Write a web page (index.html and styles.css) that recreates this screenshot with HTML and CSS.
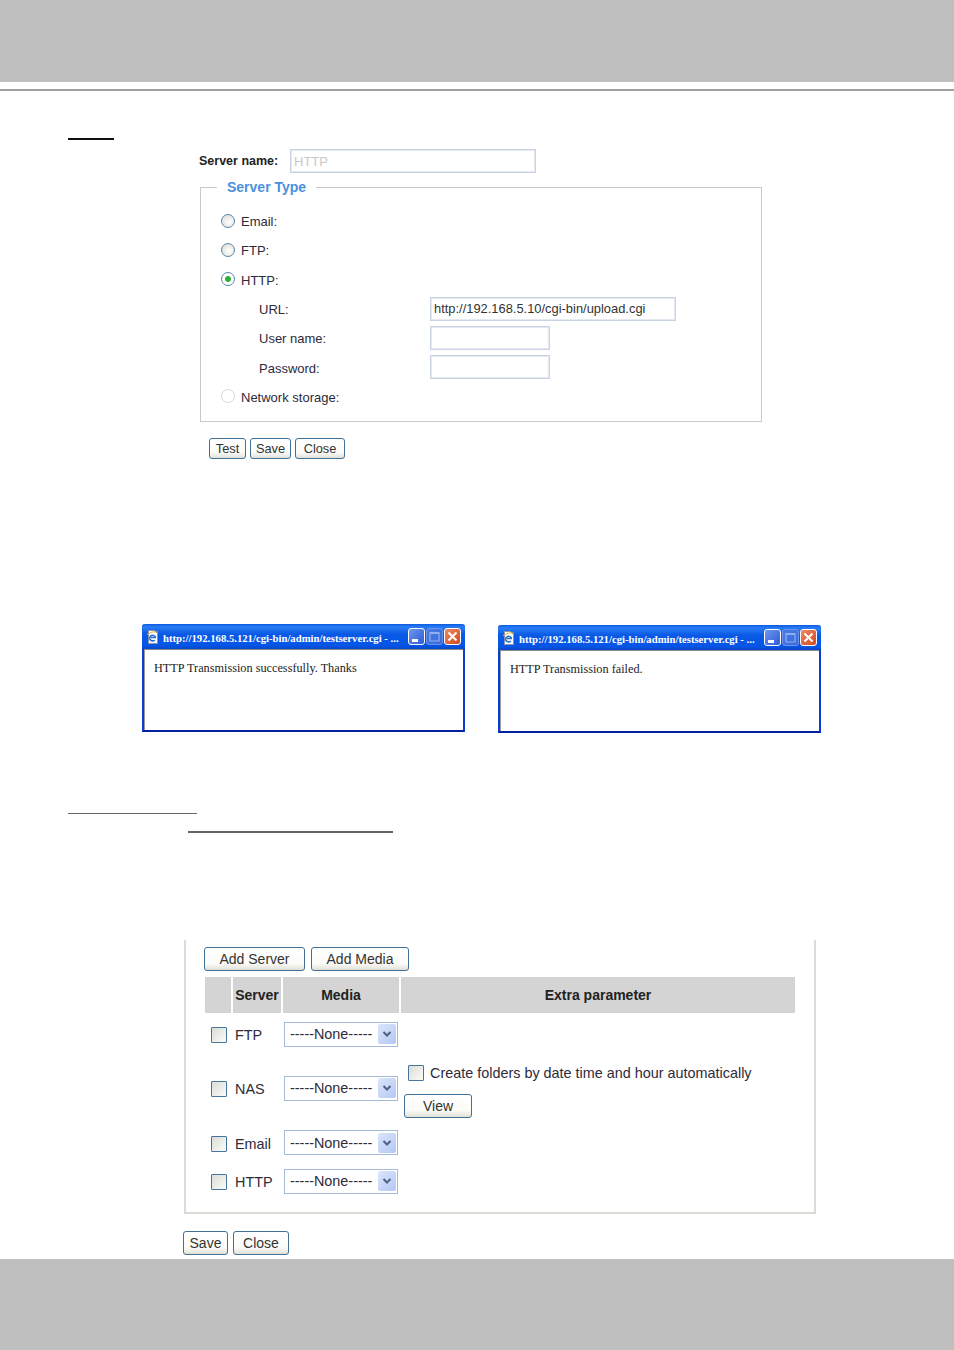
FILE: index.html
```html
<!DOCTYPE html>
<html>

<head>
    <meta charset="UTF-8">
    <title>Server Settings</title>
    <link rel="stylesheet" href="styles.css">
</head>

<body>
    <div class="band-top"></div>
    <div class="rule"></div>

    <main class="content">
        <div class="mark mark-one"></div>

        <!-- Server settings -->
        <div class="server-name">
            <label class="server-label">Server name:</label>
            <input class="text-box name-box" type="text" value="HTTP" disabled>
        </div>

        <fieldset class="server-type">
            <legend>Server Type</legend>
            <div class="type-row"><input class="radio" type="radio" name="type"><span>Email:</span></div>
            <div class="type-row"><input class="radio" type="radio" name="type"><span>FTP:</span></div>
            <div class="type-row"><input class="radio" type="radio" name="type" checked><span>HTTP:</span></div>
            <div class="sub-row"><span class="sub-label">URL:</span><input class="text-box url-box" type="text" value="http://192.168.5.10/cgi-bin/upload.cgi"></div>
            <div class="sub-row"><span class="sub-label">User name:</span><input class="text-box short-box" type="text"></div>
            <div class="sub-row"><span class="sub-label">Password:</span><input class="text-box short-box" type="password"></div>
            <div class="type-row"><input class="radio" type="radio" name="type" disabled><span>Network storage:</span></div>
        </fieldset>

        <div class="actions">
            <button class="btn btn-test">Test</button>
            <button class="btn btn-save">Save</button>
            <button class="btn btn-close">Close</button>
        </div>

        <!-- Result popups -->
        <div class="dialogs">
            <div class="dialog">
                <div class="titlebar">
                    <svg class="page-icon" width="14" height="14" viewBox="0 0 14 14"><path d="M2.5 .5h6l3 3v10h-9z" fill="#fff" stroke="#8a94a8"/><path d="M5 7.5h5M9.6 7.5a3 2.8 0 1 0-.8 2.6" fill="none" stroke="#2a6fd0" stroke-width="1.6"/><path d="M1 4.500q6-4 11-2.500" fill="none" stroke="#e8b030"/></svg>
                    <span class="title-text">http://192.168.5.121/cgi-bin/admin/testserver.cgi - ...</span>
                    <span class="win-btn"><svg width="17" height="17" viewBox="0 0 17 17"><rect x="4" y="11" width="6" height="3" fill="#fff"/></svg></span>
                    <span class="win-btn win-off"><svg width="17" height="17" viewBox="0 0 17 17"><path d="M4 4.500h9v8.500h-9z M4 5.500h9" fill="none" stroke="#8fb0ec" stroke-width="1.200"/></svg></span>
                    <span class="win-btn win-x"><svg width="17" height="17" viewBox="0 0 17 17"><path d="M4.500 4.500l8 8M12.500 4.500l-8 8" stroke="#fff" stroke-width="2"/></svg></span>
                </div>
                <div class="dialog-body">HTTP Transmission successfully. Thanks</div>
            </div>
            <div class="dialog dialog-low">
                <div class="titlebar">
                    <svg class="page-icon" width="14" height="14" viewBox="0 0 14 14"><path d="M2.5 .5h6l3 3v10h-9z" fill="#fff" stroke="#8a94a8"/><path d="M5 7.5h5M9.6 7.5a3 2.8 0 1 0-.8 2.6" fill="none" stroke="#2a6fd0" stroke-width="1.6"/><path d="M1 4.500q6-4 11-2.500" fill="none" stroke="#e8b030"/></svg>
                    <span class="title-text">http://192.168.5.121/cgi-bin/admin/testserver.cgi - ...</span>
                    <span class="win-btn"><svg width="17" height="17" viewBox="0 0 17 17"><rect x="4" y="11" width="6" height="3" fill="#fff"/></svg></span>
                    <span class="win-btn win-off"><svg width="17" height="17" viewBox="0 0 17 17"><path d="M4 4.500h9v8.500h-9z M4 5.500h9" fill="none" stroke="#8fb0ec" stroke-width="1.200"/></svg></span>
                    <span class="win-btn win-x"><svg width="17" height="17" viewBox="0 0 17 17"><path d="M4.500 4.500l8 8M12.500 4.500l-8 8" stroke="#fff" stroke-width="2"/></svg></span>
                </div>
                <div class="dialog-body">HTTP Transmission failed.</div>
            </div>
        </div>

        <div class="mark mark-two"></div>
        <div class="mark mark-three"></div>

        <!-- Media panel -->
        <div class="panel">
            <div class="panel-actions">
                <button class="btn btn-big btn-add-server">Add Server</button>
                <button class="btn btn-big btn-add-media">Add Media</button>
            </div>
            <table class="media-table">
                <thead>
                    <tr>
                        <th class="col-check"></th>
                        <th class="col-server">Server</th>
                        <th class="col-media">Media</th>
                        <th>Extra parameter</th>
                    </tr>
                </thead>
                <tbody>
                    <tr class="row-ftp">
                        <td class="cell-check"><input class="check" type="checkbox"></td>
                        <td class="cell-name">FTP</td>
                        <td class="cell-media"><div class="select"><span>-----None-----</span><span class="arrow"><svg width="10" height="8" viewBox="0 0 10 8"><path d="M1.500 2l3.500 3.500L8.500 2" fill="none" stroke="#4d6185" stroke-width="2"/></svg></span></div></td>
                        <td></td>
                    </tr>
                    <tr class="row-nas">
                        <td class="cell-check"><input class="check" type="checkbox"></td>
                        <td class="cell-name">NAS</td>
                        <td class="cell-media"><div class="select"><span>-----None-----</span><span class="arrow"><svg width="10" height="8" viewBox="0 0 10 8"><path d="M1.500 2l3.500 3.500L8.500 2" fill="none" stroke="#4d6185" stroke-width="2"/></svg></span></div></td>
                        <td class="cell-extra">
                            <div class="extra-line"><input class="check" type="checkbox"><span>Create folders by date time and hour automatically</span></div>
                            <button class="btn btn-big btn-view">View</button>
                        </td>
                    </tr>
                    <tr class="row-email">
                        <td class="cell-check"><input class="check" type="checkbox"></td>
                        <td class="cell-name">Email</td>
                        <td class="cell-media"><div class="select"><span>-----None-----</span><span class="arrow"><svg width="10" height="8" viewBox="0 0 10 8"><path d="M1.500 2l3.500 3.500L8.500 2" fill="none" stroke="#4d6185" stroke-width="2"/></svg></span></div></td>
                        <td></td>
                    </tr>
                    <tr class="row-http">
                        <td class="cell-check"><input class="check" type="checkbox"></td>
                        <td class="cell-name">HTTP</td>
                        <td class="cell-media"><div class="select"><span>-----None-----</span><span class="arrow"><svg width="10" height="8" viewBox="0 0 10 8"><path d="M1.500 2l3.500 3.500L8.500 2" fill="none" stroke="#4d6185" stroke-width="2"/></svg></span></div></td>
                        <td></td>
                    </tr>
                </tbody>
            </table>
        </div>

        <div class="panel-footer">
            <button class="btn btn-big btn-panel-save">Save</button>
            <button class="btn btn-big btn-panel-close">Close</button>
        </div>
    </main>

    <div class="band-bottom"></div>
</body>

</html>
```

FILE: styles.css
```css
* {
    box-sizing: border-box;
}

html,
body {
    height: 100%;
}

body {
    margin: 0;
    display: flex;
    flex-direction: column;
    background-color: #fff;
    color: #2e2a3a;
    font-family: "Liberation Sans", Arial, sans-serif;
    font-size: 13px;
}

.band-top {
    height: 82px;
    background-color: #bebfbe;
}

.rule {
    height: 2px;
    margin-top: 7px;
    background-color: #a0a0a0;
}

.band-bottom {
    height: 91px;
    background-color: #bebfbe;
}

.content {
    flex: 1;
    padding-left: 68px;
}

.mark {
    background-color: #111;
}

.mark-one {
    width: 46px;
    height: 2px;
    margin-top: 47px;
}

.mark-two {
    width: 129px;
    height: 1px;
    margin-top: 80px;
    background-color: #666;
}

.mark-three {
    width: 205px;
    height: 2px;
    margin-top: 17px;
    margin-left: 120px;
    background-color: #666;
}

/* Server settings */
.server-name {
    display: flex;
    align-items: center;
    margin-top: 9px;
    margin-left: 131px;
}

.server-label {
    width: 91px;
    font-size: 12.5px;
    font-weight: bold;
    color: #222;
}

.text-box {
    height: 24px;
    padding: 0 3px;
    border: 1px solid #c9d3e4;
    outline: 1px solid #e4e9f2;
    outline-offset: -2px;
    background-color: #fff;
    color: #333;
    font-family: "Liberation Sans", Arial, sans-serif;
    font-size: 12.9px;
}

.name-box {
    width: 246px;
    font-size: 13px;
    color: #c8c8c8;
}

.url-box {
    width: 246px;
}

.short-box {
    width: 120px;
}

.server-type {
    width: 562px;
    margin: 5px 0 0 132px;
    padding: 10px 0;
    border: 1px solid #ccc9c0;
}

.server-type legend {
    margin-left: 16px;
    padding: 0 10px;
    color: #4a90dc;
    font-size: 14px;
    line-height: 18px;
    font-weight: bold;
}

.type-row,
.sub-row {
    display: flex;
    align-items: center;
    height: 29.3px;
}

.type-row {
    padding-top: 2px;
    padding-left: 20px;
    gap: 6px;
}

.sub-row {
    padding-left: 58px;
}

.sub-label {
    width: 171px;
    padding-top: 2px;
}

.radio {
    appearance: none;
    width: 14px;
    height: 14px;
    margin: 0 0 2px;
    border: 1.5px solid #5a85a8;
    border-radius: 50%;
    background: radial-gradient(circle at 60% 60%, #fff, #d8d8d0);
}

.radio:checked {
    background: radial-gradient(circle, #2fae3a 0 2.500px, #fff 3.500px);
}

.radio:disabled {
    border-color: #d8d8d2;
    background: #fff;
}

.actions {
    display: flex;
    gap: 4px;
    margin: 16px 0 0 141px;
}

.btn {
    height: 21px;
    padding: 0;
    border: 1.500px solid #3f7199;
    border-radius: 3px;
    background: linear-gradient(#fff, #fbfbf8 70%, #e2e0d6);
    color: #333;
    font-family: "Liberation Sans", Arial, sans-serif;
    font-size: 12.800px;
}

.btn-test {
    width: 37px;
}

.btn-save {
    width: 41px;
}

.btn-close {
    width: 50px;
}

.btn-big {
    height: 24px;
    font-size: 14px;
}

.btn-add-server {
    width: 101px;
}

.btn-add-media {
    width: 98px;
}

.btn-view {
    display: block;
    width: 68px;
    margin-top: 13px;
}

.btn-panel-save {
    width: 45px;
}

.btn-panel-close {
    width: 56px;
}

/* Result popups */
.dialogs {
    display: flex;
    align-items: flex-start;
    gap: 33px;
    margin: 165px 0 0 74px;
}

.dialog {
    display: flex;
    flex-direction: column;
    width: 323px;
    height: 108px;
    border: 2px solid #0a3ed0;
    border-top: 0;
    border-bottom-color: #00209c;
    border-radius: 3px 3px 0 0;
}

.dialog-low {
    margin-top: 1px;
}

.titlebar {
    display: flex;
    align-items: center;
    height: 25px;
    margin: 0 -2px;
    padding: 0 4px;
    border-radius: 4px 4px 0 0;
    background: linear-gradient(#0a5be0, #2a7cf4 12%, #0a5ae6 40%, #0555e8 85%, #0a48c8);
}

.page-icon {
    flex: none;
    margin-right: 3px;
}

.title-text {
    flex: 1;
    padding-top: 2px;
    color: #fff;
    font-family: "Liberation Serif", "Times New Roman", serif;
    font-size: 10.7px;
    font-weight: bold;
    white-space: nowrap;
}

.win-btn {
    display: flex;
    width: 17px;
    height: 17px;
    margin-left: 1px;
    border: 1px solid #fff;
    border-radius: 3px;
    background: linear-gradient(135deg, #6f96f0, #2c5cd8);
}

.win-btn svg {
    margin: -1px;
    flex: none;
}

.win-off {
    border-color: #6d94ea;
    background: linear-gradient(135deg, #4a7ce8, #3a68dc);
}

.win-x {
    background: linear-gradient(135deg, #ec8a68, #d24a20);
}

.dialog-body {
    flex: 1;
    padding: 11px 9px 0;
    border-top: 1px solid #888;
    border-left: 1px solid #999;
    background-color: #fff;
    color: #222;
    font-family: "Liberation Serif", "Times New Roman", serif;
    font-size: 12.25px;
}

/* Media panel */
.panel {
    width: 632px;
    height: 274px;
    margin: 107px 0 0 116px;
    padding: 7px 0 0 18px;
    border: 2px solid #dcdcd6;
    border-top: 0;
}

.panel-actions {
    display: flex;
    gap: 6px;
}

.media-table {
    width: 594px;
    margin: 4px 0 0 -1px;
    border-collapse: separate;
    border-spacing: 2px;
    table-layout: fixed;
    font-size: 14.4px;
}

.media-table th {
    height: 36px;
    padding: 0;
    background-color: #d4d4d4;
    color: #222;
    font-size: 14px;
}

.col-check {
    width: 26px;
}

.col-server {
    width: 48px;
}

.col-media {
    width: 116px;
}

.media-table td {
    padding: 0;
}

.row-ftp {
    height: 38px;
}

.row-nas {
    height: 66px;
}

.row-email {
    height: 39px;
}

.row-http {
    height: 34px;
}

.check {
    appearance: none;
    display: block;
    flex: none;
    width: 16px;
    height: 16px;
    margin: 0;
    border: 1.500px solid #47749c;
    border-radius: 1px;
    background: linear-gradient(135deg, #dcdcd6, #fbfbf8);
}

.cell-check .check {
    margin: 2px 0 0 6px;
}

.cell-name {
    padding-left: 2px !important;
    padding-top: 2px !important;
}

.cell-media {
    padding-left: 1px !important;
}

.select {
    display: flex;
    align-items: center;
    justify-content: space-between;
    width: 114px;
    height: 25px;
    padding: 0 1px 0 5px;
    border: 1.500px solid #a4bad6;
    background-color: #fff;
}

.arrow {
    display: flex;
    align-items: center;
    justify-content: center;
    width: 18px;
    height: 20px;
    border-radius: 2px;
    background: linear-gradient(135deg, #dbe5fb, #b4c8f4);
}

.cell-extra {
    vertical-align: top;
    padding-top: 10px !important;
    padding-left: 3px !important;
}

.extra-line {
    display: flex;
    align-items: center;
    gap: 6px;
    padding-left: 4px;
}

.panel-footer {
    display: flex;
    gap: 5px;
    margin: 17px 0 0 115px;
}
```
